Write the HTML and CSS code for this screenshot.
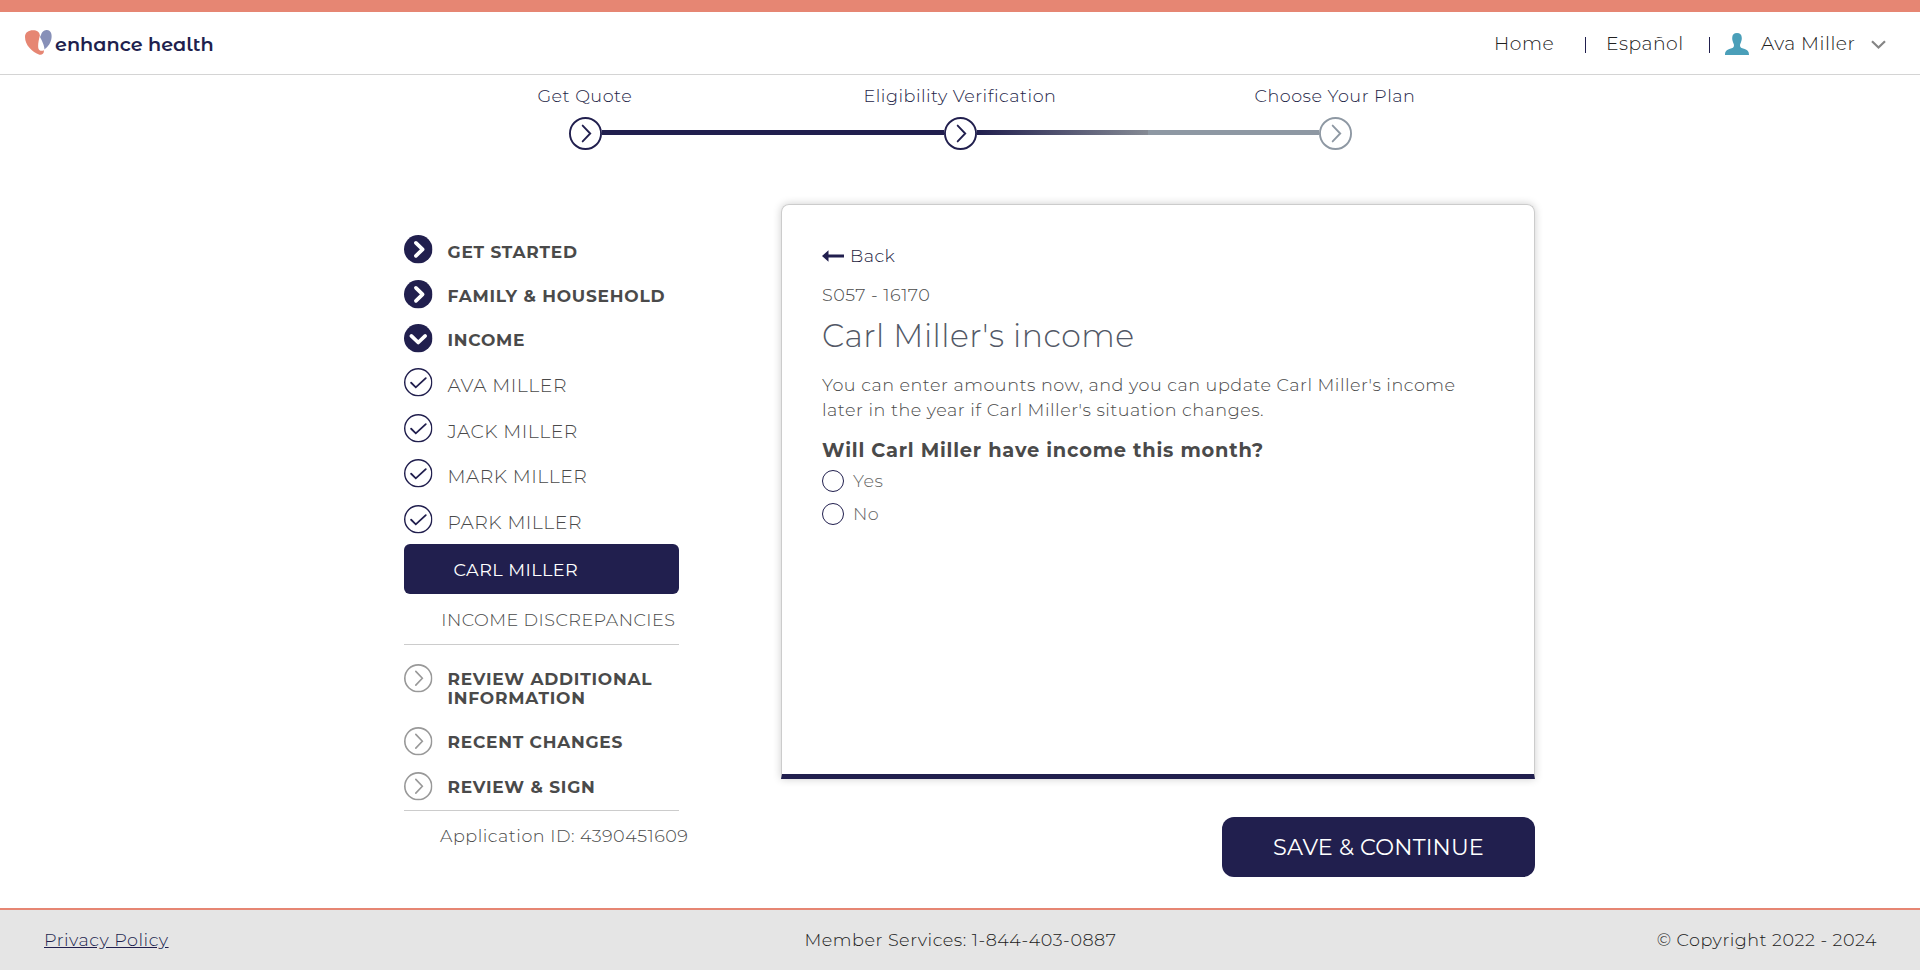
FILE: index.html
```
<!DOCTYPE html>
<html lang="en">
<head>
<meta charset="utf-8">
<title>Enhance Health - Income</title>
<link rel="stylesheet" href="styles.css">
</head>
<body>
<svg class="defs" aria-hidden="true">
  <symbol id="next-solid" viewBox="0 0 28 28"><circle cx="14" cy="14" r="14" fill="#211f4e"/><path d="M11.700 7.700l6.600 6.400-6.600 6.400" fill="none" stroke="#fff" stroke-width="3.600" stroke-linecap="round" stroke-linejoin="round"/></symbol>
  <symbol id="down-solid" viewBox="0 0 28 28"><circle cx="14" cy="14" r="14" fill="#211f4e"/><path d="M7.200 11.700l6.800 6.500 6.800-6.500" fill="none" stroke="#fff" stroke-width="3.600" stroke-linecap="round" stroke-linejoin="round"/></symbol>
  <symbol id="check" viewBox="0 0 28 28"><circle cx="14" cy="14" r="13.300" fill="#fff" stroke="#211f4e" stroke-width="1.400"/><path d="M7 14.500l4.600 4.500 9.800-9" fill="none" stroke="#211f4e" stroke-width="1.800" stroke-linecap="round"/></symbol>
  <symbol id="next" viewBox="0 0 28 28"><circle cx="14" cy="14" r="13.200" fill="#fff" stroke="currentColor" stroke-width="1.600"/><path d="M11.600 7.300l6.400 6.700-6.400 6.700" fill="none" stroke="currentColor" stroke-width="1.600" stroke-linecap="round"/></symbol>
</svg>

<header class="header">
  <a class="logo">
    <svg class="logo-mark" viewBox="0 0 27 25"><path d="M16 5C17 1 20 0 22 0c3 0 5 3 4.600 7C26.200 13 23 16.500 19.500 19.500 19.300 15 16.500 10 15 7z" fill="#8790b8"/><path d="M0 7C0 2.500 3.500.3 8 .3c4 0 6.500 1.600 6.900 5.200C13.500 10 12.700 16 13.400 18.400c.7 2.400 3.300 2.900 5.400 1.800.6 3-1.500 5-4.300 4.500C7 22 0 15 0 7z" fill="#e68673"/></svg>
    <span class="logo-text">enhance health</span>
  </a>
  <nav class="nav">
    <a class="nav-home">Home</a>
    <span class="bar"></span>
    <a class="nav-lang">Español</a>
    <span class="bar"></span>
    <a class="nav-user">
      <svg class="avatar" viewBox="0 0 24 22"><path d="M12 0c3 0 4.800 1.700 4.800 5 0 1.700-.3 2.600-.8 4.200-.4 1.200-1 2-1 3 0 2.500 1.500 2.700 4 3.600 3.500 1.200 5 2.500 5 6.200H0c0-3.700 1.500-5 5-6.200 2.500-.9 4-1.100 4-3.600 0-1-.6-1.800-1-3C7.500 7.600 7.200 6.700 7.200 5 7.200 1.700 9 0 12 0z" fill="#4a9fb9"/></svg>
      <span class="user-name">Ava Miller</span>
      <svg class="caret" viewBox="0 0 15 10"><path d="M1 1.300l6.500 6.200L14 1.300" fill="none" stroke="#858585" stroke-width="2.200"/></svg>
    </a>
  </nav>
</header>

<section class="progress">
  <div class="labels"><span>Get Quote</span><span>Eligibility Verification</span><span>Choose Your Plan</span></div>
  <div class="track">
    <svg class="step"><use href="#next"/></svg>
    <span class="line"></span>
    <svg class="step"><use href="#next"/></svg>
    <span class="line line-half"></span>
    <svg class="step step-todo"><use href="#next"/></svg>
  </div>
</section>

<main class="main">
  <aside class="sidebar">
    <div class="item section h46"><svg class="icon"><use href="#next-solid"/></svg><span>GET STARTED</span></div>
    <div class="item section h43 up"><svg class="icon"><use href="#next-solid"/></svg><span>FAMILY &amp; HOUSEHOLD</span></div>
    <div class="item section h44"><svg class="icon"><use href="#down-solid"/></svg><span>INCOME</span></div>
    <div class="item member h46"><svg class="icon"><use href="#check"/></svg><span>AVA MILLER</span></div>
    <div class="item member h45"><svg class="icon"><use href="#check"/></svg><span>JACK MILLER</span></div>
    <div class="item member h46"><svg class="icon"><use href="#check"/></svg><span>MARK MILLER</span></div>
    <div class="item member h39"><svg class="icon"><use href="#check"/></svg><span>PARK MILLER</span></div>
    <div class="current">CARL MILLER</div>
    <div class="discrepancies">INCOME DISCREPANCIES</div>
    <div class="item section todo h63"><svg class="icon"><use href="#next"/></svg><span>REVIEW ADDITIONAL INFORMATION</span></div>
    <div class="item section todo h45"><svg class="icon"><use href="#next"/></svg><span>RECENT CHANGES</span></div>
    <div class="item section todo last"><svg class="icon"><use href="#next"/></svg><span>REVIEW &amp; SIGN</span></div>
    <div class="app-id">Application ID: 4390451609</div>
  </aside>

  <div class="content">
    <section class="card">
      <a class="back"><svg class="arrow" viewBox="0 0 22 12"><path d="M0 6l6.500-5.800v4.300H22v3H6.500v4.300z" fill="#211f4e"/></svg>Back</a>
      <div class="code">S057 - 16170</div>
      <h1 class="title">Carl Miller's income</h1>
      <p class="intro">You can enter amounts now, and you can update Carl Miller's income<br>later in the year if Carl Miller's situation changes.</p>
      <h2 class="question">Will Carl Miller have income this month?</h2>
      <label class="option"><span class="radio"></span><span class="option-text">Yes</span></label>
      <label class="option"><span class="radio"></span><span class="option-text">No</span></label>
    </section>
    <button class="save">SAVE &amp; CONTINUE</button>
  </div>
</main>

<footer class="footer">
  <a class="privacy">Privacy Policy</a>
  <span>Member Services: 1-844-403-0887</span>
  <span class="copyright">© Copyright 2022 - 2024</span>
</footer>
</body>
</html>
```

FILE: styles.css
```
* { box-sizing: border-box; }
body {
  margin: 0;
  height: 970px;
  display: flex;
  flex-direction: column;
  background: #fff;
  color: #4a4a4a;
  font: 300 17.600px/20px Montserrat, "Open Sans", sans-serif;
  letter-spacing: .5px;
  overflow: hidden;
}
svg { display: block; flex: none; }
.defs { position: absolute; width: 0; height: 0; }

.header {
  height: 75px;
  flex: none;
  display: flex;
  justify-content: space-between;
  align-items: flex-start;
  border-top: 12px solid #e68673;
  border-bottom: 1px solid #d4d4d4;
  padding: 0 34px 0 25px;
}
.logo { display: flex; padding-top: 18px; gap: 3px; }
.logo-mark { width: 27px; height: 25px; }
.logo-text {
  padding-top: 4px;
  font: 600 19.200px/20px "Montserrat Alternates", Montserrat, sans-serif;
  letter-spacing: 0;
  color: #211f4e;
}
.nav { display: flex; padding-top: 22px; font-size: 18.800px; letter-spacing: .5px; color: #212121; }
.nav-home { width: 91px; }
.nav-lang { width: 103px; margin-left: 20px; }
.bar { width: 1px; height: 16px; margin-top: 3px; background: #211f4e; }
.nav-user { display: flex; margin-left: 15px; }
.avatar { width: 24px; height: 22px; margin: -1px 12px 0 0; }
.user-name { width: 95px; white-space: nowrap; }
.caret { width: 15px; height: 10px; margin: 6px 0 0 15px; }

.progress { height: 129px; flex: none; color: #1d2547; }
.labels { height: 42px; padding: 11px 0 0 537.500px; display: flex; }
.labels span:nth-child(1) { width: 326px; }
.labels span:nth-child(2) { width: 391px; }
.track { display: flex; align-items: flex-start; padding-left: 569.400px; color: #211f4e; }
.step { width: 33px; height: 33px; }
.step-todo { color: #8e98a3; }
.line { width: 342px; height: 5px; margin-top: 13px; background: #211f4e; }
.line-half { background: linear-gradient(90deg, #211f4e 0, #858a94 50%, #8e98a3 50%); }

.main { flex: 1; display: flex; padding-left: 404px; }
.sidebar { width: 275px; padding-top: 31px; margin-right: 102px; }
.item { display: flex; align-items: flex-start; gap: 15px; }
.icon { width: 28.500px; height: 28.500px; }
.section { font-size: 17px; font-weight: 700; letter-spacing: .77px; }
.section span { padding-top: 7px; }
.section.up .icon { margin-top: -.7px; }
.section.up span { padding-top: 5px; }
.section + .section.h44 span { padding-top: 6px; }
.member { font-size: 18.800px; letter-spacing: .5px; }
.member span { padding-top: 8px; }
.h39 { height: 39px; }
.h43 { height: 43px; }
.h44 { height: 44px; }
.h45 { height: 45px; }
.h46 { height: 46px; }
.h63 { height: 63px; }
.current {
  height: 50px;
  padding: 16px 0 0 49.500px;
  border-radius: 6px;
  background: #211f4e;
  color: #fff;
  font-weight: 400;
  letter-spacing: .45px;
}
.discrepancies { height: 51px; padding: 16px 0 0 37.300px; border-bottom: 1px solid #ccc; white-space: nowrap; letter-spacing: .45px; }
.todo { color: #999; line-height: 19px; }
.todo span { color: #4a4a4a; padding-top: 6px; }
.discrepancies + .todo { margin-top: 19px; }
.last { height: 39px; border-bottom: 1px solid #ccc; }
.app-id { padding: 15px 0 0 36px; white-space: nowrap; }

.content { width: 754px; display: flex; flex-direction: column; align-items: flex-end; }
.card {
  width: 754px;
  height: 575px;
  padding: 41px 40px;
  border: 1px solid #ccc;
  border-bottom: 5px solid #211f4e;
  border-radius: 8px 8px 0 0;
  box-shadow: 0 0 8px rgba(0, 0, 0, .2);
}
.back { display: flex; color: #1b1b40; }
.arrow { width: 22px; height: 12px; margin: 4px 6px 0 0; }
.code { margin-top: 19px; }
.title { margin: 11px 0 0; font-size: 31.500px; line-height: 40px; font-weight: 300; color: #525866; }
.intro { margin: 16px 0 0; line-height: 25px; white-space: nowrap; }
.question { margin: 15px 0 0; font-size: 19.400px; line-height: 26px; font-weight: 700; letter-spacing: .77px; }
.option { display: flex; gap: 9px; height: 33px; margin-top: 7px; color: #666; }
.option + .option { margin-top: 0; }
.option-text { padding-top: 1px; }
.radio { width: 22px; height: 22px; border: 1px solid #211f4e; border-radius: 50%; }
.save {
  width: 313px;
  height: 60px;
  margin-top: 38px;
  border: 0;
  border-radius: 12px;
  background: #211f4e;
  color: #fff;
  font: 400 22.400px/60px Montserrat, sans-serif;
  letter-spacing: .15px;
  padding: 0;
}

.footer {
  height: 62px;
  flex: none;
  display: grid;
  grid-template-columns: 1fr auto 1fr;
  padding: 20px 43px 0 44px;
  border-top: 2px solid #e68673;
  background: #e5e5e5;
  color: #212121;
}
.privacy { color: #211f4e; text-decoration: underline; }
.copyright { text-align: right; }
```
